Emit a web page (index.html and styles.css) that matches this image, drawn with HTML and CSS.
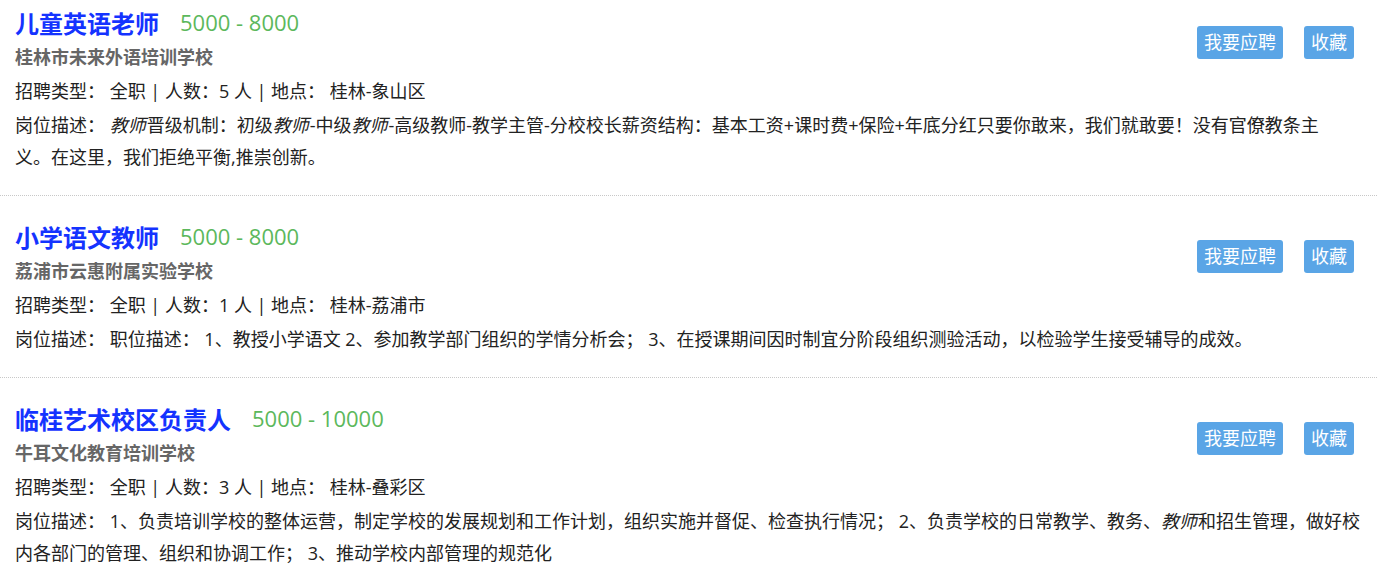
FILE: index.html
```html
<!DOCTYPE html>
<html lang="zh-CN">
<head>
  <meta charset="UTF-8">
  <meta name="viewport" content="width=device-width, initial-scale=1.0">
  <title>招聘信息</title>
  <link rel="stylesheet" href="styles.css">
</head>
<body>
<ul class="job-list">
  <li class="job">
    <div class="job-top">
      <div class="job-info">
        <div class="job-head"><a class="job-title" href="#">儿童英语老师</a><span class="job-salary">5000 - 8000</span></div>
        <div class="job-school">桂林市未来外语培训学校</div>
        <div class="job-meta">招聘类型： 全职 | 人数：5 人 | 地点： 桂林-象山区</div>
      </div>
      <div class="job-actions">
        <button class="btn">我要应聘</button>
        <button class="btn">收藏</button>
      </div>
    </div>
    <p class="job-desc">岗位描述： <em>教师</em>晋级机制：初级<em>教师</em>-中级<em>教师</em>-高级教师-教学主管-分校校长薪资结构：基本工资+课时费+保险+年底分红只要你敢来，我们就敢要！没有官僚教条主义。在这里，我们拒绝平衡,推崇创新。</p>
  </li>
  <li class="job">
    <div class="job-top">
      <div class="job-info">
        <div class="job-head"><a class="job-title" href="#">小学语文教师</a><span class="job-salary">5000 - 8000</span></div>
        <div class="job-school">荔浦市云惠附属实验学校</div>
        <div class="job-meta">招聘类型： 全职 | 人数：1 人 | 地点： 桂林-荔浦市</div>
      </div>
      <div class="job-actions">
        <button class="btn">我要应聘</button>
        <button class="btn">收藏</button>
      </div>
    </div>
    <p class="job-desc">岗位描述： 职位描述： 1、教授小学语文 2、参加教学部门组织的学情分析会； 3、在授课期间因时制宜分阶段组织测验活动，以检验学生接受辅导的成效。</p>
  </li>
  <li class="job">
    <div class="job-top">
      <div class="job-info">
        <div class="job-head"><a class="job-title" href="#">临桂艺术校区负责人</a><span class="job-salary">5000 - 10000</span></div>
        <div class="job-school">牛耳文化教育培训学校</div>
        <div class="job-meta">招聘类型： 全职 | 人数：3 人 | 地点： 桂林-叠彩区</div>
      </div>
      <div class="job-actions">
        <button class="btn">我要应聘</button>
        <button class="btn">收藏</button>
      </div>
    </div>
    <p class="job-desc">岗位描述： 1、负责培训学校的整体运营，制定学校的发展规划和工作计划，组织实施并督促、检查执行情况； 2、负责学校的日常教学、教务、<em>教师</em>和招生管理，做好校内各部门的管理、组织和协调工作； 3、推动学校内部管理的规范化</p>
  </li>
</ul>
</body>
</html>
```

FILE: styles.css
```css
body { margin: 0; background: #fff; font-family: "Open Sans", "Noto Sans CJK SC", sans-serif; color: #222; }
.job-list { list-style: none; margin: 0; padding: 0; width: 1377px; }
.job { padding: 23px 15px 22px; border-bottom: 1px dotted #c8c8c8; }
.job:first-child { padding-top: 5px; }
.job:first-child .job-desc { padding-right: 34px; }
.job-top { display: flex; justify-content: space-between; align-items: flex-start; }
.job-head { display: flex; align-items: center; gap: 21px; height: 34px; }
.job-title { font-size: 24px; font-weight: bold; color: #1433ff; text-decoration: none; }
.job-salary { font-size: 22px; color: #5cb85c; }
.job-school { font-size: 18px; font-weight: bold; color: #666; line-height: 36px; }
.job-meta { font-size: 18px; line-height: 33px; }
.job-desc { margin: 1px 0 0; font-size: 18px; line-height: 32px; }
.job-desc em { font-style: italic; padding-right: 1px; }
.job-actions { display: flex; gap: 21px; margin-top: 21px; margin-right: 8px; }
.btn { height: 33px; padding: 0 7px; border: none; border-radius: 3px; background: #5aa5e6; color: #fff; font-family: inherit; font-size: 18px; line-height: 33px; cursor: pointer; }
```
